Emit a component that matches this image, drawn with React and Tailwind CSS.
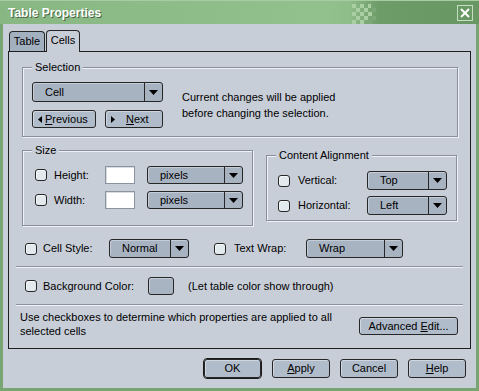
import React from "react";

const FONT = { fontFamily: '"Liberation Sans", Arial, sans-serif' };

function Arrow() {
  return (
    <svg width="9" height="5" viewBox="0 0 9 5">
      <path d="M0 0H9L4.5 5Z" fill="#000" />
    </svg>
  );
}

function Select({ value, className }) {
  return (
    <div
      className={
        "flex shrink-0 rounded-[3px] border border-[#262626] bg-[#a8b3c2] shadow-[inset_1px_1px_0_#c4ccd7] " +
        className
      }
    >
      <div className="flex flex-1 items-center pl-[12px] leading-none">{value}</div>
      <div className="flex w-[18px] items-center justify-center border-l border-[#262626]">
        <Arrow />
      </div>
    </div>
  );
}

function Check() {
  return (
    <div className="h-[12px] w-[12px] shrink-0 rounded-[3px] border border-[#262626] bg-[#e2eaee] shadow-[inset_1px_1px_0_#f6f9fa]" />
  );
}

function Btn({ children, className }) {
  return (
    <div
      className={
        "flex shrink-0 items-center justify-center rounded-[3px] border border-[#262626] bg-[#b1bcca] shadow-[inset_1px_1px_0_#cfd6df] leading-none " +
        className
      }
    >
      {children}
    </div>
  );
}

function Group({ label, className, children }) {
  return (
    <div className={"flex flex-col border border-[#87909c] shadow-[inset_1px_1px_0_#eef1f5,1px_1px_0_#eef1f5] " + className}>
      <div className="-mt-[7px] ml-[9px] w-fit bg-[#c8ced8] px-[3px] leading-[13px]">{label}</div>
      {children}
    </div>
  );
}

function Sep({ className }) {
  return <div className={"ml-[7px] h-px w-[447px] bg-[#8a939f] shadow-[0_1px_0_#eef1f5] " + className} />;
}

export default function App() {
  return (
    <div className="relative flex h-[391px] w-[479px] flex-col bg-[#78a572] text-[11px] text-black" style={FONT}>
      {/* window behind, top-right */}
      <div className="absolute right-0 top-0 h-[2px] w-[52px] border-l border-[#555] bg-[#d4d4d4]" />

      {/* title bar */}
      <div className="relative flex h-[24px] shrink-0 items-center border-t border-[#a7cca1] bg-[linear-gradient(to_right,#88b783_0%,#93c18d_68%,#8fbd89_73%,#6e9c69_79%,#699764_100%)] pl-[8px] pr-[6px]">
        <span
          className="text-[12px] font-bold leading-none text-white"
          style={{ textShadow: "1px 1px 0 #45673f" }}
        >
          Table Properties
        </span>
        <svg className="ml-[247px] mt-[2px]" width="28" height="20" viewBox="0 0 28 20">
          <g fill="#a9cfa3">
            <rect x="4" y="0" width="4" height="4" />
            <rect x="12" y="0" width="4" height="4" />
            <rect x="20" y="0" width="3" height="4" />
            <rect x="8" y="4" width="4" height="4" />
            <rect x="16" y="4" width="4" height="4" />
            <rect x="4" y="8" width="4" height="4" />
            <rect x="12" y="8" width="4" height="4" />
            <rect x="20" y="8" width="4" height="4" />
            <rect x="8" y="12" width="4" height="4" />
            <rect x="16" y="12" width="4" height="4" />
            <rect x="4" y="16" width="4" height="4" />
            <rect x="12" y="16" width="4" height="4" />
          </g>
          <g fill="#7ca776">
            <rect x="24" y="4" width="4" height="4" />
            <rect x="24" y="12" width="4" height="4" />
            <rect x="20" y="16" width="4" height="4" />
          </g>
        </svg>
        <div className="ml-auto flex h-[16px] w-[16px] items-center justify-center border border-[#c6dfc2]">
          <svg width="10" height="10" viewBox="0 0 10 10">
            <path d="M1 1L9 9M9 1L1 9" stroke="#fff" strokeWidth="2" />
          </svg>
        </div>
      </div>

      {/* body */}
      <div className="mx-[3px] mb-[3px] flex flex-1 flex-col bg-[#c8ced8] px-[5px]">
        {/* tabs */}
        <div className="relative z-10 flex h-[27px] items-end pl-px">
          <div className="flex h-[20px] w-[36px] items-center justify-center rounded-t-[4px] border border-b-0 border-[#262626] bg-[#a3b0c0] leading-none">
            Table
          </div>
          <div className="-mb-px ml-px flex h-[22px] w-[34px] items-center justify-center rounded-t-[4px] border border-b-0 border-[#262626] bg-[#c8ced8] pb-[2px] leading-none">
            Cells
          </div>
        </div>

        {/* panel */}
        <div className="flex h-[298px] flex-col border border-[#1e1e1e]">
          {/* Selection */}
          <Group label="Selection" className="ml-[13px] mt-[15px] w-[436px] pb-[8px]">
            <div className="mt-[8px] flex pl-[9px]">
              <div className="flex w-[131px] flex-col gap-[8px]">
                <Select value="Cell" className="h-[20px] w-[131px]" />
                <div className="flex justify-between">
                  <Btn className="h-[18px] w-[64px] justify-start pl-[5px]">
                    <svg width="4" height="7" viewBox="0 0 4 7" className="mr-[3px]">
                      <path d="M4 0V7L0 3.5Z" fill="#000" />
                    </svg>
                    <span>
                      <span className="underline">P</span>revious
                    </span>
                  </Btn>
                  <Btn className="h-[18px] w-[58px] justify-start pl-[5px]">
                    <svg width="4" height="7" viewBox="0 0 4 7" className="mr-[11px]">
                      <path d="M0 0V7L4 3.5Z" fill="#000" />
                    </svg>
                    <span>
                      <span className="underline">N</span>ext
                    </span>
                  </Btn>
                </div>
              </div>
              <div className="ml-[19px] mt-[7px] leading-[16px]">
                Current changes will be applied
                <br />
                before changing the selection.
              </div>
            </div>
          </Group>

          {/* Size + Content Alignment */}
          <div className="flex items-start">
            <Group label="Size" className="ml-[13px] mt-[13px] w-[231px] pb-[16px]">
              <div className="mt-[9px] flex flex-col gap-[7px] pl-[12px]">
                {["Height:", "Width:"].map((l) => (
                  <div key={l} className="flex h-[18px] items-center">
                    <Check />
                    <span className="ml-[7px] w-[51px]">{l}</span>
                    <div className="h-[18px] w-[30px] border border-[#8b939e] bg-white shadow-[inset_1px_1px_0_#d8dde3]" />
                    <Select value="pixels" className="ml-[12px] h-[18px] w-[96px]" />
                  </div>
                ))}
              </div>
            </Group>
            <Group label="Content Alignment" className="ml-[13px] mt-[18px] w-[191px] pb-[5px]">
              <div className="mt-[9px] flex flex-col gap-[6px] pl-[11px]">
                {[
                  ["Vertical:", "Top"],
                  ["Horizontal:", "Left"],
                ].map(([l, v]) => (
                  <div key={l} className="flex h-[19px] items-center">
                    <Check />
                    <span className="ml-[8px] w-[69px]">{l}</span>
                    <Select value={v} className="h-[19px] w-[80px]" />
                  </div>
                ))}
              </div>
            </Group>
          </div>

          {/* Cell style row */}
          <div className="ml-[16px] mt-[13px] flex h-[19px] items-center">
            <Check />
            <span className="ml-[6px] w-[66px]">Cell Style:</span>
            <Select value="Normal" className="h-[19px] w-[80px]" />
            <div className="ml-[25px]">
              <Check />
            </div>
            <span className="ml-[8px] w-[72px]">Text Wrap:</span>
            <Select value="Wrap" className="h-[19px] w-[97px]" />
          </div>

          <Sep className="mt-[8px]" />

          {/* Background color row */}
          <div className="ml-[16px] mt-[10px] flex h-[18px] items-center">
            <Check />
            <span className="ml-[6px] w-[105px]">Background Color:</span>
            <div className="h-[18px] w-[26px] rounded-[3px] border border-[#262626] bg-[#a9b4c3] shadow-[inset_1px_1px_0_#c4ccd7]" />
            <span className="ml-[14px]">(Let table color show through)</span>
          </div>

          <Sep className="mt-[9px]" />

          <div className="mt-[5px] flex items-start">
            <div className="ml-[11px] w-[320px] leading-[14px]">
              Use checkboxes to determine which properties are applied to all selected cells
            </div>
            <Btn className="ml-[19px] mt-[7px] h-[18px] w-[99px]">
              <span>
                Advanced <span className="underline">E</span>dit...
              </span>
            </Btn>
          </div>
        </div>

        {/* bottom buttons */}
        <div className="mt-[9px] flex justify-end gap-[10px] pr-[5px]">
          <div className="rounded-[4px] border border-[#1a1a1a] p-0">
            <Btn className="h-[19px] w-[57px]">OK</Btn>
          </div>
          <Btn className="mt-px h-[19px] w-[58px]">
            <span>
              <span className="underline">A</span>pply
            </span>
          </Btn>
          <Btn className="mt-px h-[19px] w-[58px]">Cancel</Btn>
          <Btn className="mt-px h-[19px] w-[58px]">
            <span>
              <span className="underline">H</span>elp
            </span>
          </Btn>
        </div>
      </div>
    </div>
  );
}
